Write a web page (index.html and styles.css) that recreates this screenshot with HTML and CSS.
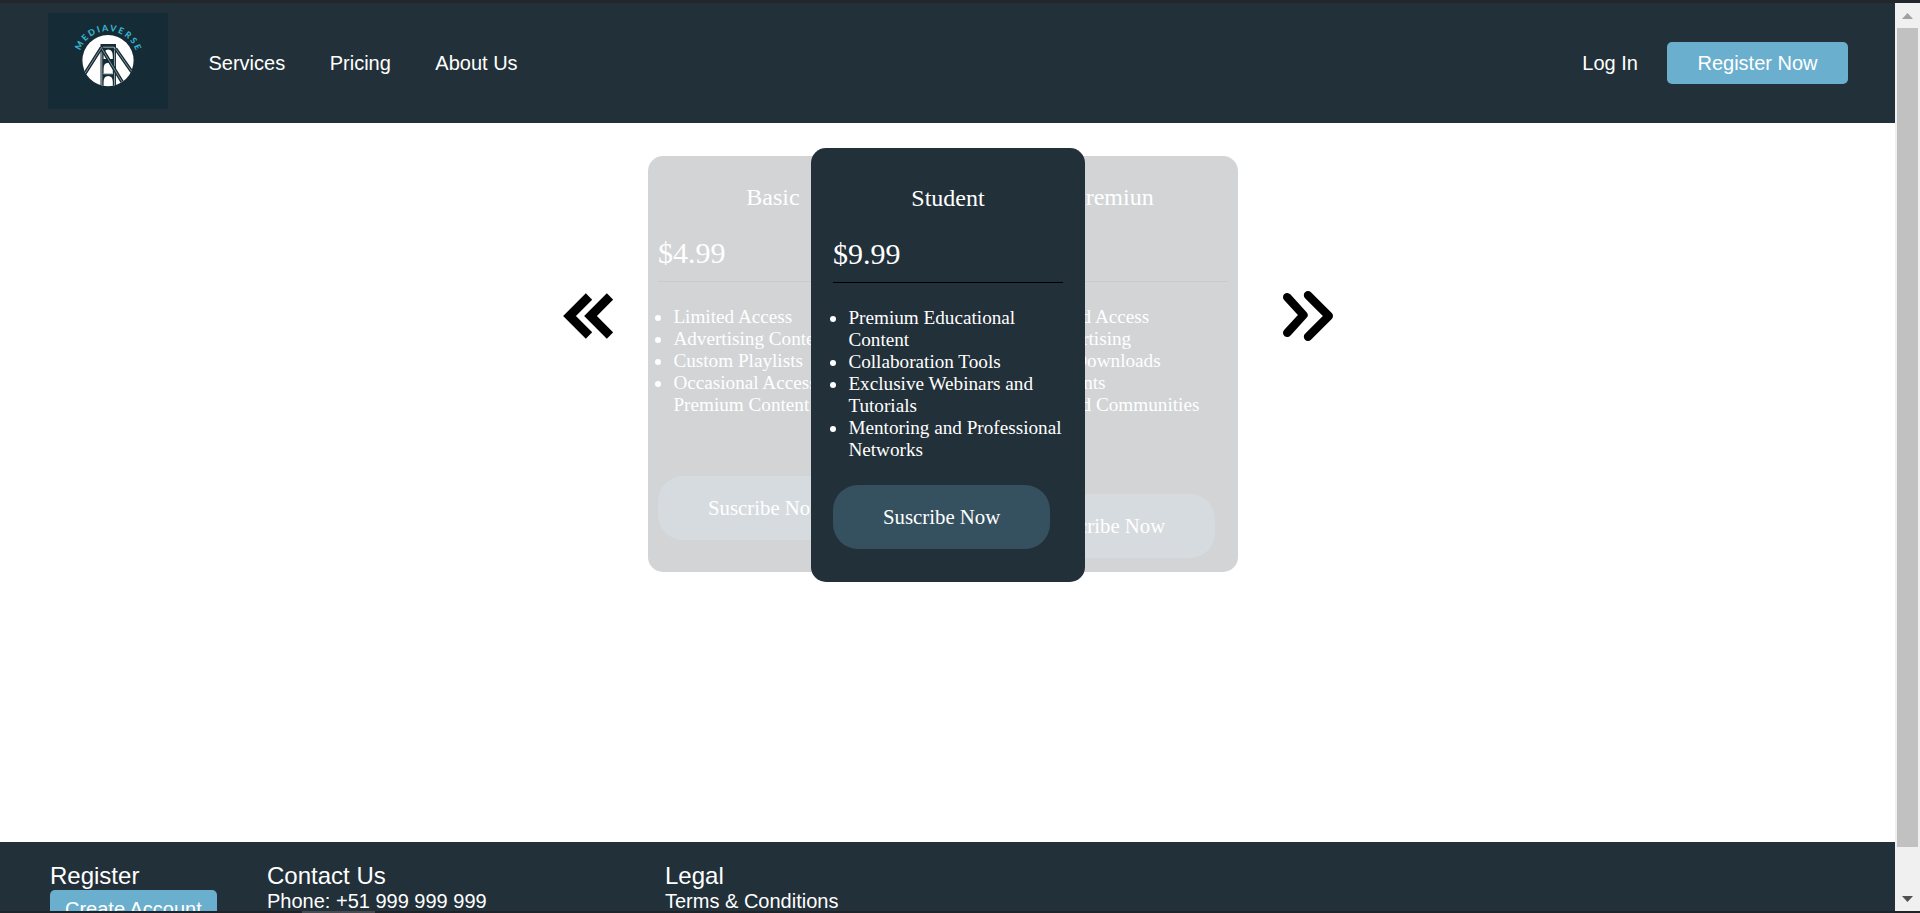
FILE: index.html
```html
<!DOCTYPE html>
<html lang="en">
<head>
<meta charset="utf-8">
<title>Mediaverse - Pricing</title>
<link rel="stylesheet" href="styles.css">
</head>
<body>
<div class="edge-top"></div>
<div class="window">
  <div class="page">
    <header class="header">
      <svg class="logo" viewBox="0 0 120 96" width="120" height="96">
        <defs>
          <path id="arc" d="M33.3 60.1 A29.5 29.5 0 1 1 86.7 60.1"/>
          <clipPath id="disc"><ellipse cx="60" cy="47.6" rx="25.6" ry="25.6"/></clipPath>
        </defs>
        <rect width="120" height="96" fill="#152c36"/>
        <text class="logo-text" text-anchor="middle"><textPath href="#arc" startOffset="50%" textLength="72">MEDIAVERSE</textPath></text>
        <circle cx="60" cy="47.6" r="25.6" fill="#fff"/>
        <g clip-path="url(#disc)" fill="none" stroke="#152c36">
          <path fill="#152c36" fill-rule="evenodd" stroke="none" d="M52.5 31H68V74H52.5ZM55.6 46V43Q55.6 36.5 60.2 36.5T64.8 43V46ZM55.6 61V56Q55.6 49.8 60.2 49.8T64.8 56V61ZM55.6 74V69Q55.6 63 60.2 63T64.8 69V74Z"/>
          <path d="M55 34.2H66M53.8 34V74M66.6 34V74" stroke="#fff" stroke-width=".6"/>
          <path d="M55.6 60.6H64.8" stroke="#bcc3c6" stroke-width="1.4"/>
          <path d="M53.5 34.5L36 62M53.8 35.5L76 72M67.5 35.5L86 62" stroke-width="3.4"/>
          <path d="M53.5 34.5L36 62M53.8 35.5L76 72M67.5 35.5L86 62" stroke="#c8d0d3" stroke-width=".6"/>
        </g>
      </svg>
      <nav class="nav"><a>Services</a><a>Pricing</a><a>About Us</a></nav>
      <div class="account"><a>Log In</a><a class="register">Register Now</a></div>
    </header>
    <main class="main">
      <svg class="prev" width="50" height="46" viewBox="0 0 50 46"><path d="M26 3.5L6.5 23L26 42.5M47 3.5L27.5 23L47 42.5" fill="none" stroke="#000" stroke-width="9"/></svg>
      <section class="cards">
        <article class="card faded">
          <h2>Basic</h2>
          <p class="price">$4.99</p>
          <ul><li>Limited Access</li><li>Advertising Content</li><li>Custom Playlists</li><li>Occasional Access to Premium Content</li></ul>
          <a class="subscribe basic-gap">Suscribe Now</a>
        </article>
        <article class="card active">
          <h2>Student</h2>
          <p class="price">$9.99</p>
          <ul><li>Premium Educational Content</li><li>Collaboration Tools</li><li>Exclusive Webinars and Tutorials</li><li>Mentoring and Professional Networks</li></ul>
          <a class="subscribe">Suscribe Now</a>
        </article>
        <article class="card faded">
          <h2>Premiun</h2>
          <p class="price">$14.99</p>
          <ul><li>Unlimited Access</li><li>No Advertising</li><li>Offline Downloads</li><li>Live Events</li><li>Dedicated Communities</li></ul>
          <a class="subscribe premium-gap">Suscribe Now</a>
        </article>
      </section>
      <svg class="next" width="50" height="50" viewBox="0 0 50 50"><path d="M4.2 6.2L20.5 24L4.2 41.8M25 4.2L45.8 25L25 45.8" fill="none" stroke="#000" stroke-width="8.4" stroke-linecap="round" stroke-linejoin="round"/></svg>
    </main>
    <footer class="footer">
      <div class="col register-col"><h3>Register</h3><a class="create">Create Account</a></div>
      <div class="col contact-col"><h3>Contact Us</h3><p>Phone: +51 999 999 999</p></div>
      <div class="col"><h3>Legal</h3><p>Terms &amp; Conditions</p></div>
    </footer>
  </div>
  <div class="scrollbar">
    <svg width="25" height="25" viewBox="0 0 25 25"><path d="M7 16L12.5 10L18 16Z" fill="#a0a0a0"/></svg>
    <div class="thumb"></div>
    <svg width="25" height="25" viewBox="0 0 25 25"><path d="M7 10L12.5 16L18 10Z" fill="#505050"/></svg>
  </div>
</div>
<div class="edge-bottom"><span></span></div>
</body>
</html>
```
FILE: styles.css
```css
* { box-sizing: border-box; margin: 0; padding: 0; }
body { width: 1920px; height: 913px; overflow: hidden; background: #fff; color: #fff; }
svg { display: block; flex: none; }
.edge-top { height: 3px; background: #23272c; }
.edge-bottom { height: 2px; background: #1f2227; padding-left: 302px; }
.edge-bottom span { display: block; width: 73px; height: 2px; background: #4a4b50; }
.window { display: flex; height: 908px; }
.page { width: 1895px; height: 908px; overflow: hidden; }

.header { display: flex; align-items: center; height: 120px; padding: 0 47px 0 48px; background: #223039; font: 20px/23px "Liberation Sans", Arial, sans-serif; }
.logo { align-self: flex-start; margin-top: 10px; }
.logo-text { font: 900 8.8px Lato, sans-serif; fill: #35b3cd; }
.nav { display: flex; gap: 44.5px; margin-left: 40.5px; }
.account { display: flex; align-items: center; gap: 29px; margin-left: auto; }
.register { padding: 10px 30.5px 9px; border-radius: 5px; background: #6bafce; }

.main { display: flex; height: 719px; padding-left: 563px; font-family: "Liberation Serif", "Times New Roman", serif; }
.prev { margin-top: 170px; }
.next { margin: 168px 0 0 45px; }
.cards { display: flex; align-items: flex-start; margin-left: 35px; }
.card { flex: none; width: 250px; height: 416px; margin-top: 33px; padding: 28px 10px 0; border-radius: 15px; background: #223039; }
.faded { opacity: .2; }
.active { position: relative; z-index: 1; width: 274px; height: 434px; margin: 25px -97px 0 -87px; padding: 37px 22px 0; }
.card h2 { font-size: 24px; line-height: 27px; font-weight: 400; text-align: center; }
.price { height: 46px; margin-top: 25px; border-bottom: 1px solid #000; font-size: 30px; line-height: 34px; }
.card ul { margin: 24px 0; padding-left: 15.4px; font-size: 19.2px; line-height: 22px; }
.subscribe { display: inline-block; padding: 20px 50px; border-radius: 25px; background: #35515f; font-size: 20.8px; line-height: 24px; white-space: nowrap; }
.basic-gap { margin-top: 36px; }
.premium-gap { margin-top: 54px; }

.footer { display: flex; height: 200px; padding: 20px 0 0 50px; background: #223039; font: 20px/23px "Liberation Sans", Arial, sans-serif; }
.footer h3 { font-size: 24px; line-height: 28px; font-weight: 400; }
.register-col { width: 217px; }
.contact-col { width: 398px; }
.create { display: inline-block; padding: 8px 15px 10px; border-radius: 5px; background: #6bafce; }

.scrollbar { display: flex; flex-direction: column; justify-content: space-between; width: 25px; background: #f0f0f0; }
.thumb { width: 21px; height: 819px; margin: 0 2px auto; background: #c1c1c1; }
```
